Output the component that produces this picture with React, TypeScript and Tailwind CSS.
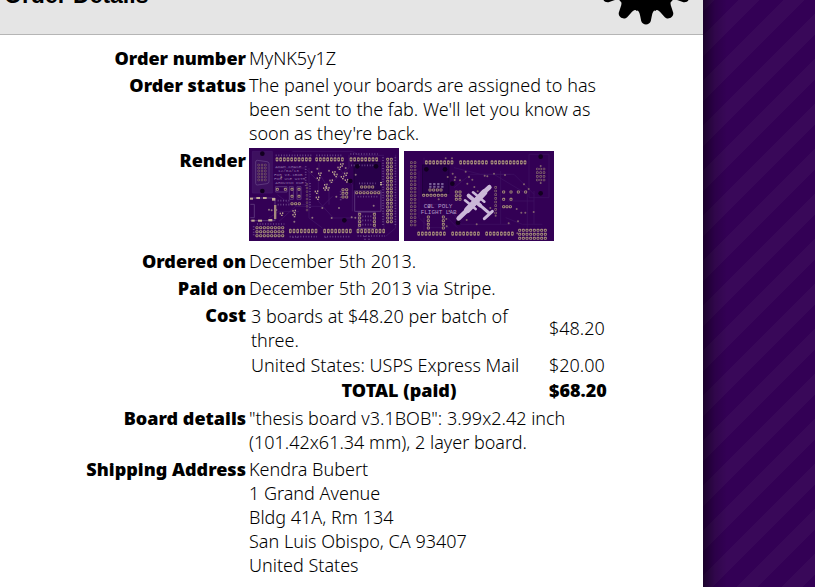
import type { ReactNode } from "react";

type Run = [x: number, y: number, cols: number, rows: number, dx: number, dy: number];

function Pads({ runs, w = 8, h = 11 }: { runs: Run[]; w?: number; h?: number }) {
  return (
    <g>
      {runs.flatMap(([x, y, cols, rows, dx, dy], r) =>
        Array.from({ length: cols * rows }, (_, i) => {
          const cx = x + (i % cols) * dx;
          const cy = y + Math.floor(i / cols) * dy;
          return (
            <g key={`${r}-${i}`}>
              <rect x={cx - w / 2} y={cy - h / 2} width={w} height={h} rx={3} fill="#a58a7c" />
              <circle cx={cx} cy={cy} r={2} fill="#2c0a3c" />
            </g>
          );
        }),
      )}
    </g>
  );
}

function Dots({ points, r, fill }: { points: number[][]; r: number; fill: string }) {
  return (
    <g fill={fill}>
      {points.map(([x, y]) => (
        <circle key={`${x}-${y}`} cx={x} cy={y} r={r} />
      ))}
    </g>
  );
}

function Parts({ points }: { points: number[][] }) {
  return (
    <g fill="#b59d8c">
      {points.map(([x, y]) => (
        <g key={`${x}-${y}`}>
          <rect x={x - 5} y={y - 4} width={4} height={5} />
          <rect x={x + 2} y={y - 5} width={4} height={5} />
          <rect x={x - 1} y={y + 2} width={5} height={4} />
        </g>
      ))}
    </g>
  );
}

function BoardTop() {
  return (
    <svg role="img" aria-label="Top of board" className="h-[93px] w-[150px]" viewBox="0 0 450 279">
      <rect width="450" height="279" fill="#330055" />
      <g fill="none" stroke="#45186a" strokeWidth="2">
        <path d="M78 60h90l40 40v60l45 50h60M90 220l50-45h80l30-30M300 20v40l-60 50v60M270 60l40 50v80M85 140l40 30h60M405 60v180l-20 20M180 60v150l40 30M130 10h180l20 12h75M60 210l30-20h60M395 60v120M440 20v220l-30 25M210 45v30l30 50" />
        <path d="M10 10h60v125H10z" fill="#3d105f" />
      </g>
      <g fill="none" stroke="#6d4c8b" strokeWidth="2">
        <path d="M20 42q0-5 5-5l29 4q6 1 6 6v53q0 6-6 7l-29 4q-5 0-5-5z" />
        <path d="M4 150h74v68H4M4 169h12v40H4" />
        <path d="M317 127h79v63h-79zM328 192h51v49h-51zM121 116h12v38h-12zM144 116h12v38h-12zM80 116h34v16H80z" />
      </g>
      <rect x="315" y="43" width="79" height="83" fill="#28004a" stroke="#1c0037" strokeWidth="2" />
      <g fill="#8a6ba2" fontFamily="Liberation Mono, monospace" fontSize="13">
        <text x="79" y="60">ADAM CHASE</text>
        <text x="87" y="72">12/04/13</text>
        <text x="75" y="84">FOR v3.1BOB</text>
        <text x="75" y="96">FOR USE WITH</text>
        <text x="79" y="108">ARDUINO DUE</text>
      </g>
      <g stroke="#684486" strokeWidth="5" strokeDasharray="3 5" fill="none">
        <path d="M80 22h110M202 22h80M304 18h82M306 52h70M122 266h82M226 266h80M326 264h82M402 28v205M439 28v205M24 228h82M14 235v30M170 55v60M183 105v80M86 158h35M86 170h40M340 205h28M340 217h28M340 230h28M275 130v28M330 106h50M326 146h64" />
        <path d="M348 264v12M360 264v12M132 266v8M145 266v8M230 266v8" />
      </g>
      <Pads
        runs={[
          [84, 34, 10, 1, 11, 0],
          [203, 34, 8, 1, 11, 0],
          [306, 34, 8, 1, 11, 0],
          [124, 249, 8, 1, 11, 0],
          [227, 249, 8, 1, 11, 0],
          [327, 249, 8, 1, 11, 0],
        ]}
        h={13}
      />
      <Pads
        runs={[
          [24, 239, 8, 3, 11, 12],
          [416, 34, 2, 18, 11, 11],
          [323, 134, 7, 1, 11, 0],
          [338, 117, 4, 1, 11, 0],
          [332, 199, 1, 4, 0, 11],
          [376, 199, 1, 4, 0, 11],
          [282, 125, 2, 3, 11, 11],
          [129, 167, 3, 1, 11, 0],
          [129, 124, 2, 2, 21, 21],
          [85, 124, 2, 1, 24, 0],
        ]}
        w={9}
        h={9}
      />
      <g opacity="0.65">
        <Pads runs={[[29, 51, 3, 6, 10, 9], [174, 109, 1, 8, 0, 11]]} w={7} h={7} />
      </g>
      <g fill="#c0a995">
        <rect x="22" y="147" width="11" height="6" />
        <rect x="42" y="147" width="11" height="6" />
        <rect x="3" y="149" width="9" height="6" />
        <rect x="69" y="150" width="10" height="8" />
        <rect x="7" y="215" width="10" height="6" />
        <rect x="27" y="215" width="12" height="6" />
        <rect x="58" y="213" width="12" height="7" />
        <rect x="75" y="171" width="7" height="42" fill="#a58a7c" />
        <rect x="393" y="102" width="6" height="4" />
        <rect x="393" y="108" width="6" height="4" />
      </g>
      <Parts
        points={[
          [208, 92], [230, 112], [236, 122], [246, 99], [260, 82], [270, 60], [278, 50], [280, 88],
          [205, 150], [135, 190], [135, 202], [97, 198], [202, 132], [212, 78], [227, 122],
          [290, 78], [292, 98], [254, 74],
        ]}
      />
      <Dots
        points={[
          [188, 72], [205, 62], [290, 60], [320, 80], [270, 180], [220, 180], [248, 210], [190, 209],
          [308, 208], [60, 185], [68, 187], [82, 186], [374, 173], [136, 221], [240, 68], [262, 146],
          [97, 88], [319, 209], [422, 186],
        ]}
        r={3}
        fill="#8f7380"
      />
      <Dots points={[[40, 17], [40, 129], [325, 55], [381, 55], [304, 99], [286, 217]]} r={7} fill="#120020" />
    </svg>
  );
}

function BoardBottom() {
  return (
    <svg role="img" aria-label="Bottom of board" className="h-[90px] w-[150px]" viewBox="0 0 450 270">
      <rect width="450" height="270" fill="#330055" />
      <g fill="none" stroke="#401263" strokeWidth="2">
        <path d="M45 60v140l30 30h60M60 160h70l40 60h150M150 50l80 20h100l60 60M290 60v160M305 200l50 20h60M390 120v100M150 110l50-40h120M270 70l100 60v100M60 20v20M375 10h60v130h-60zM130 200l30 30M60 200v40M310 150h80" />
      </g>
      <rect x="55" y="42" width="80" height="86" fill="#28004a" stroke="#1c0037" strokeWidth="2" />
      <path d="M79 96v16M91 96v16M103 96v16M115 96v16" stroke="#796096" strokeWidth="7" strokeDasharray="6 2" />
      <Pads
        runs={[
          [67, 34, 8, 1, 11, 0],
          [170, 34, 8, 1, 11, 0],
          [264, 34, 10, 1, 11, 0],
          [44, 248, 8, 1, 11, 0],
          [146, 248, 8, 1, 11, 0],
          [248, 248, 8, 1, 11, 0],
        ]}
        h={13}
      />
      <Pads
        runs={[
          [78, 117, 4, 1, 11, 0],
          [59, 133, 7, 1, 11, 0],
          [157, 123, 2, 3, 11, 11],
          [73, 198, 1, 4, 0, 11],
          [118, 198, 1, 4, 0, 11],
          [299, 123, 4, 1, 22, 0],
          [299, 145, 2, 1, 22, 0],
          [299, 167, 3, 1, 10, 0],
          [347, 238, 8, 3, 11, 12],
        ]}
        w={9}
        h={9}
      />
      <g opacity="0.7">
        <Pads runs={[[22, 35, 2, 18, 11, 11], [400, 54, 3, 4, 10, 11], [275, 109, 1, 8, 0, 11]]} w={8} h={8} />
      </g>
      <Dots
        points={[
          [125, 22], [144, 22], [146, 68], [152, 87], [168, 88], [154, 79], [185, 62], [195, 78],
          [205, 86], [190, 98], [211, 108], [242, 74], [250, 76], [270, 68], [303, 72], [256, 104],
          [221, 121], [131, 78], [104, 145], [76, 168], [136, 180], [127, 204], [128, 226],
          [188, 207], [218, 220], [259, 171], [338, 174], [342, 211], [352, 185], [364, 185],
          [389, 183], [314, 217], [340, 247], [360, 100], [374, 114], [410, 45], [410, 96], [275, 194],
        ]}
        r={3}
        fill="#80616f"
      />
      <Dots points={[[67, 55], [123, 55], [145, 98], [162, 215], [410, 17], [410, 127]]} r={7} fill="#120020" />
      <g fill="#b196c4" fontFamily="Liberation Mono, monospace" fontSize="18">
        <text x="59" y="171">CØL POLY</text>
        <text x="50" y="189">FLIGHT LAB</text>
      </g>
      <g fill="none" stroke="#cbb8d8" strokeLinecap="round">
        <path d="M164 202l28-27M256 109l-18 16" strokeWidth="14" />
        <path d="M190 177l50-52" strokeWidth="19" />
        <path d="M183 148l32 26M207 124l34 28" strokeWidth="8" />
        <path d="M194 134l34 29" strokeWidth="12" />
        <path d="M225 160l30 26M241 203l24-22" strokeWidth="9" />
      </g>
    </svg>
  );
}

function Gear() {
  return (
    <svg aria-hidden="true" className="-mt-[75px] size-[100px] shrink-0" viewBox="-50 -50 100 100">
      <circle r="35" />
      {Array.from({ length: 12 }, (_, i) => (
        <path
          key={i}
          transform={`rotate(${i * 30})`}
          d="M-10 35.5C-7.500 35-6.500 37-5.800 41L-4.800 46C-3.500 50.500 3.500 50.500 4.800 46L5.800 41C6.500 37 7.500 35 10 35.500L0 0Z"
        />
      ))}
    </svg>
  );
}

function Row({ label, children }: { label: string; children: ReactNode }) {
  return (
    <tr className="align-top">
      <th scope="row" className="pr-[3px] pb-[3px] text-right font-black whitespace-nowrap">
        {label}
      </th>
      <td className="pb-[3px]">{children}</td>
    </tr>
  );
}

export default function App() {
  return (
    <div className="flex min-h-screen bg-white font-['Noto_Sans','Open_Sans',sans-serif] text-lg leading-6 font-light text-black">
      <main className="min-w-0 flex-1">
        <header className="flex h-[35px] items-start justify-between overflow-hidden border-b border-[#b5b5b5] bg-[#e5e5e5] pr-[7px] pl-1">
          <h1 className="-mt-[19px] font-['Liberation_Sans',Arial,sans-serif] text-[23px] leading-7 font-bold">Order Details</h1>
          <Gear />
        </header>
        <table className="mt-[11px] w-full table-fixed border-collapse">
          <colgroup>
            <col className="w-[249px]" />
            <col />
          </colgroup>
          <tbody>
            <Row label="Order number">MyNK5y1Z</Row>
            <Row label="Order status">
              <p className="max-w-[362px]">
                The panel your boards are assigned to has been sent to the fab. We'll let you know as soon as they're
                back.
              </p>
            </Row>
            <Row label="Render">
              <div className="flex items-end gap-[5px] pb-[5px]">
                <BoardTop />
                <BoardBottom />
              </div>
            </Row>
            <Row label="Ordered on">December 5th 2013.</Row>
            <Row label="Paid on">December 5th 2013 via Stripe.</Row>
            <Row label="Cost">
              <table className="w-[362px] table-fixed border-separate border-spacing-x-0.5 border-spacing-y-px">
                <colgroup>
                  <col />
                  <col className="w-[60px]" />
                </colgroup>
                <tbody>
                  <tr>
                    <td className="pr-4">3 boards at $48.20 per batch of three.</td>
                    <td>$48.20</td>
                  </tr>
                  <tr>
                    <td>United States: USPS Express Mail</td>
                    <td>$20.00</td>
                  </tr>
                  <tr className="font-black">
                    <th scope="row" className="text-center font-black">
                      TOTAL (paid)
                    </th>
                    <td>$68.20</td>
                  </tr>
                </tbody>
              </table>
            </Row>
            <Row label="Board details">
              <p className="max-w-[362px]">"thesis board v3.1BOB": 3.99x2.42 inch (101.42x61.34 mm), 2 layer board.</p>
            </Row>
            <Row label="Shipping Address">
              <address className="not-italic">
                Kendra Bubert
                <br />1 Grand Avenue
                <br />
                Bldg 41A, Rm 134
                <br />
                San Luis Obispo, CA 93407
                <br />
                United States
              </address>
            </Row>
          </tbody>
        </table>
      </main>
      <aside className="w-28 shrink-0 bg-[#330055] bg-[linear-gradient(135deg,#390859_13%,#330055_13%,#330055_39%,#390859_39%,#390859_63%,#330055_63%,#330055_89%,#390859_89%)] bg-size-[45px_45px]">
        <div className="h-full w-6 bg-linear-to-r from-black/50 via-black/15 to-transparent" />
      </aside>
    </div>
  );
}
